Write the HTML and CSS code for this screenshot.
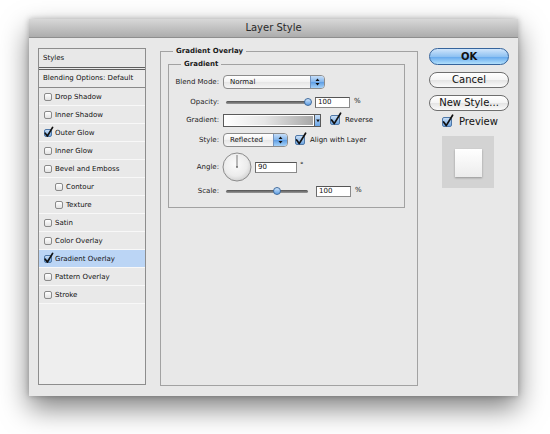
FILE: index.html
```html
<!DOCTYPE html>
<html>
  <head>
    <title>Layer Style</title>
    <link rel="stylesheet" href="styles.css">
  </head>
  <body>
    <div class="window">
      <div class="titlebar">Layer Style</div>
      <div class="content">
        <div class="list">
          <div class="head">Styles</div>
          <div class="blend">Blending Options: Default</div>
          <div class="item"><span class="cb"></span>Drop Shadow</div>
          <div class="item"><span class="cb"></span>Inner Shadow</div>
          <div class="item"><span class="cb on"><svg width="8" height="8" viewBox="0 0 8 8"><path d="M1.2 4.2 L3.4 7 L8.6 -1.6" /></svg></span>Outer Glow</div>
          <div class="item"><span class="cb"></span>Inner Glow</div>
          <div class="item"><span class="cb"></span>Bevel and Emboss</div>
          <div class="item sub"><span class="cb"></span>Contour</div>
          <div class="item sub"><span class="cb"></span>Texture</div>
          <div class="item"><span class="cb"></span>Satin</div>
          <div class="item"><span class="cb"></span>Color Overlay</div>
          <div class="item selected"><span class="cb on"><svg width="8" height="8" viewBox="0 0 8 8"><path d="M1.2 4.2 L3.4 7 L8.6 -1.6" /></svg></span>Gradient Overlay</div>
          <div class="item"><span class="cb"></span>Pattern Overlay</div>
          <div class="item"><span class="cb"></span>Stroke</div>
        </div>

        <fieldset class="group">
          <legend>Gradient Overlay</legend>
          <fieldset class="inner">
            <legend>Gradient</legend>
            <div class="form">
              <span class="label">Blend Mode:</span>
              <div class="ctl">
                <div class="select blendmode">
                  <span class="value">Normal</span>
                  <span class="step"><svg width="13" height="12" viewBox="0 0 13 12"><path d="M4.5 5 L6.5 2.5 L8.5 5 Z M4.5 7 L6.5 9.5 L8.5 7 Z" /></svg></span>
                </div>
              </div>

              <span class="label">Opacity:</span>
              <div class="ctl">
                <div class="slider"><div class="track"></div><div class="knob opacity"></div></div>
                <div class="field pct">100</div>
                <span class="unit">%</span>
              </div>

              <span class="label">Gradient:</span>
              <div class="ctl">
                <div class="grad"></div>
                <div class="grad-btn"><svg width="6" height="11" viewBox="0 0 6 11"><path d="M1.2 4.5 L4.8 4.5 L3 7.2 Z" /></svg></div>
                <span class="cb big on"><svg width="10" height="10" viewBox="0 0 10 10"><path d="M1.6 5 L4.2 8.6 L10.6 -1.8" /></svg></span>
                <span class="cb-text">Reverse</span>
              </div>

              <span class="label">Style:</span>
              <div class="ctl">
                <div class="select stylemode">
                  <span class="value">Reflected</span>
                  <span class="step"><svg width="13" height="12" viewBox="0 0 13 12"><path d="M4.5 5 L6.5 2.5 L8.5 5 Z M4.5 7 L6.5 9.5 L8.5 7 Z" /></svg></span>
                </div>
                <span class="cb big on align"><svg width="10" height="10" viewBox="0 0 10 10"><path d="M1.6 5 L4.2 8.6 L10.6 -1.8" /></svg></span>
                <span class="cb-text">Align with Layer</span>
              </div>

              <span class="label">Angle:</span>
              <div class="ctl">
                <svg class="dial" width="30" height="30" viewBox="0 0 30 30">
                  <defs>
                    <radialGradient id="dialfill" cx="0.45" cy="0.4" r="0.6">
                      <stop offset="0" stop-color="#fbfbfb" />
                      <stop offset="0.7" stop-color="#ececec" />
                      <stop offset="1" stop-color="#d2d2d2" />
                    </radialGradient>
                  </defs>
                  <circle cx="15" cy="15" r="14" fill="url(#dialfill)" stroke="#8c8c8c" stroke-width="1" />
                  <line x1="15" y1="15" x2="15" y2="3" stroke="#7a7a7a" stroke-width="1" />
                  <circle cx="15" cy="15" r="0.9" fill="#666" />
                </svg>
                <div class="field angle">90</div>
                <span class="deg">°</span>
              </div>

              <span class="label">Scale:</span>
              <div class="ctl">
                <div class="slider"><div class="track"></div><div class="knob scale"></div></div>
                <div class="field pct scalefield">100</div>
                <span class="unit">%</span>
              </div>
            </div>
          </fieldset>
        </fieldset>

        <div class="side">
          <div class="btn ok">OK</div>
          <div class="btn">Cancel</div>
          <div class="btn">New Style...</div>
          <div class="preview-row">
            <span class="cb big on"><svg width="10" height="10" viewBox="0 0 10 10"><path d="M1.6 5 L4.2 8.6 L10.6 -1.8" /></svg></span>
            <span class="preview-text">Preview</span>
          </div>
          <div class="thumb"><div class="thumb-inner"></div></div>
        </div>
      </div>
    </div>
  </body>
</html>
```

FILE: styles.css
```css
* {box-sizing: border-box;}
body {margin: 0; width: 550px; height: 434px; overflow: hidden; background: #fff; font-family: "DejaVu Sans", sans-serif; font-size: 7px; color: #111;}

.window {margin: 19px 0 0 29px; width: 489px; height: 377px; background: #e8e8e8; box-shadow: 0 12px 26px rgba(0,0,0,0.5), 0 0 6px rgba(0,0,0,0.25);}
.titlebar {height: 19px; line-height: 18px; text-align: center; font-size: 10px; color: #2a2a2a; background: linear-gradient(#d8d8d8, #acacac); border-bottom: 1px solid #8e8e8e;}
.content {display: flex; align-items: flex-start; padding: 8px 0 0 9px;}

/* style list */
.list {margin-top: 2px; width: 108px; height: 337px; border: 1px solid #8d8d8d; background: #eeeeee;}
.head {height: 21px; line-height: 18px; padding-left: 4px; background: #e8e8e8; border-bottom: 3px double #5e5e5e;}
.blend {height: 18px; line-height: 17px; padding-left: 4px; background: #ebebeb; border-bottom: 1px solid #8a8a8a;}
.item {display: flex; align-items: center; height: 18px; padding-left: 5px; background: #e9e9e9; border-bottom: 1px solid #f8f8f8;}
.item.sub {padding-left: 16px;}
.item.selected {background: #bbd5f5;}

.cb {display: inline-block; flex: none; width: 8px; height: 8px; margin-right: 3px; border: 1px solid #8a8a8a; border-radius: 2px; background: linear-gradient(#ffffff, #e2e2e2);}
.cb svg {display: block; overflow: visible; margin: -1px 0 0 -1px;}
.cb path {fill: none; stroke: #111; stroke-width: 1.7; stroke-linecap: round; stroke-linejoin: round;}
.cb.on {border-color: #4f78a8; background: linear-gradient(#c8def6, #6fa6e2);}
.cb.big {width: 10px; height: 10px; border-radius: 2px;}

/* group boxes */
fieldset {margin: 0; min-width: 0;}
legend {font-weight: bold; line-height: 10px; padding: 0 3px; color: #1a1a1a;}
.group {margin-left: 14px; width: 258px; height: 340px; padding: 3px 0 0 7px; border: 1px solid #a2a2a2;}
.group > legend {margin-left: 5px;}
.inner {width: 237px; padding: 3px 0 8px 1px; border: 1px solid #a2a2a2;}
.inner > legend {margin-left: 11px;}

.form {display: grid; grid-template-columns: 49px auto; grid-template-rows: 20px 20px 16px 23px 32px 16px; column-gap: 4px; align-items: center;}
.label {text-align: right; color: #222;}
.ctl {display: flex; align-items: center;}

.select {display: flex; height: 14px; border: 1px solid #8c8c8c; border-radius: 4px; background: linear-gradient(#ffffff, #f2f2f2 50%, #e6e6e6 51%, #f6f6f6); overflow: hidden;}
.select .value {flex: 1; line-height: 12px; padding-left: 6px;}
.select .step {width: 14px; border-left: 1px solid #7393bf; background: linear-gradient(#c6def8, #80b4ec 50%, #5d9de4 51%, #a6d2f8);}
.select .step svg {display: block;}
.select .step path {fill: #111;}
.blendmode {width: 102px;}
.stylemode {width: 65px;}

.slider {position: relative; width: 82px; height: 10px; margin-left: 3px; display: flex; align-items: center;}
.track {flex: 1; height: 3px; border-radius: 2px; background: linear-gradient(#505050, #9a9a9a);}
.knob {position: absolute; top: 1px; width: 8px; height: 8px; border-radius: 50% 50% 50% 50%; border: 1px solid #3f6b9e; background: linear-gradient(#cfe4fa, #5f9fe4);}
.knob.opacity {left: 78px;}
.knob.scale {left: 47px;}

.field {height: 11px; line-height: 9px; padding-left: 2px; background: #fff; border: 1px solid #8a8a8a; border-top-color: #555; border-left-color: #6a6a6a;}
.pct {width: 35px; margin-left: 7px;}
.scalefield {margin-left: 8px;}
.unit {margin-left: 4px; margin-top: -3px;}

.grad {width: 92px; height: 13px; border: 1px solid #5a5a5a; box-shadow: inset 0 0 0 1px #fff; background: linear-gradient(to right, #ffffff, #e6e6e6 45%, #a6a6a6);}
.grad-btn {width: 6px; height: 13px; border: 1px solid #5a5a5a; border-left: none; background: linear-gradient(#c6def8, #6aa6e8);}
.grad-btn svg {display: block;}
.grad-btn path {fill: #111;}
.grad-btn + .cb {margin-left: 9px;}
.cb-text {margin-left: 2px;}
.cb.align {margin-left: 7px;}

.dial {display: block; margin-left: -1px;}
.angle {width: 42px; margin-left: 3px;}
.deg {margin-left: 3px; align-self: flex-start; margin-top: 9px;}

/* right column */
.side {margin-left: 11px; width: 80px;}
.btn {height: 16px; margin-top: 7px; line-height: 14px; text-align: center; font-size: 10px; color: #111; border: 1px solid #6e6e6e; border-radius: 9px; background: linear-gradient(#ffffff, #f4f4f4 50%, #e4e4e4 51%, #fafafa);}
.btn.ok {height: 17px; margin-top: 2px; line-height: 15px; font-weight: bold; border-color: #36649c; background: linear-gradient(#cfe5fb, #90c2f2 50%, #62a6ec 51%, #b2e0fc);}
.preview-row {display: flex; align-items: center; margin-top: 4px; padding-left: 13px; height: 13px;}
.preview-text {margin-left: 4px; font-size: 10px;}
.thumb {margin: 8px 0 0 13px; width: 52px; height: 52px; padding: 13px 0 0 13px; background: #d3d3d3;}
.thumb-inner {width: 27px; height: 28px; background: linear-gradient(#ffffff, #ececec); box-shadow: 0 1px 2px rgba(0,0,0,0.3);}
```
